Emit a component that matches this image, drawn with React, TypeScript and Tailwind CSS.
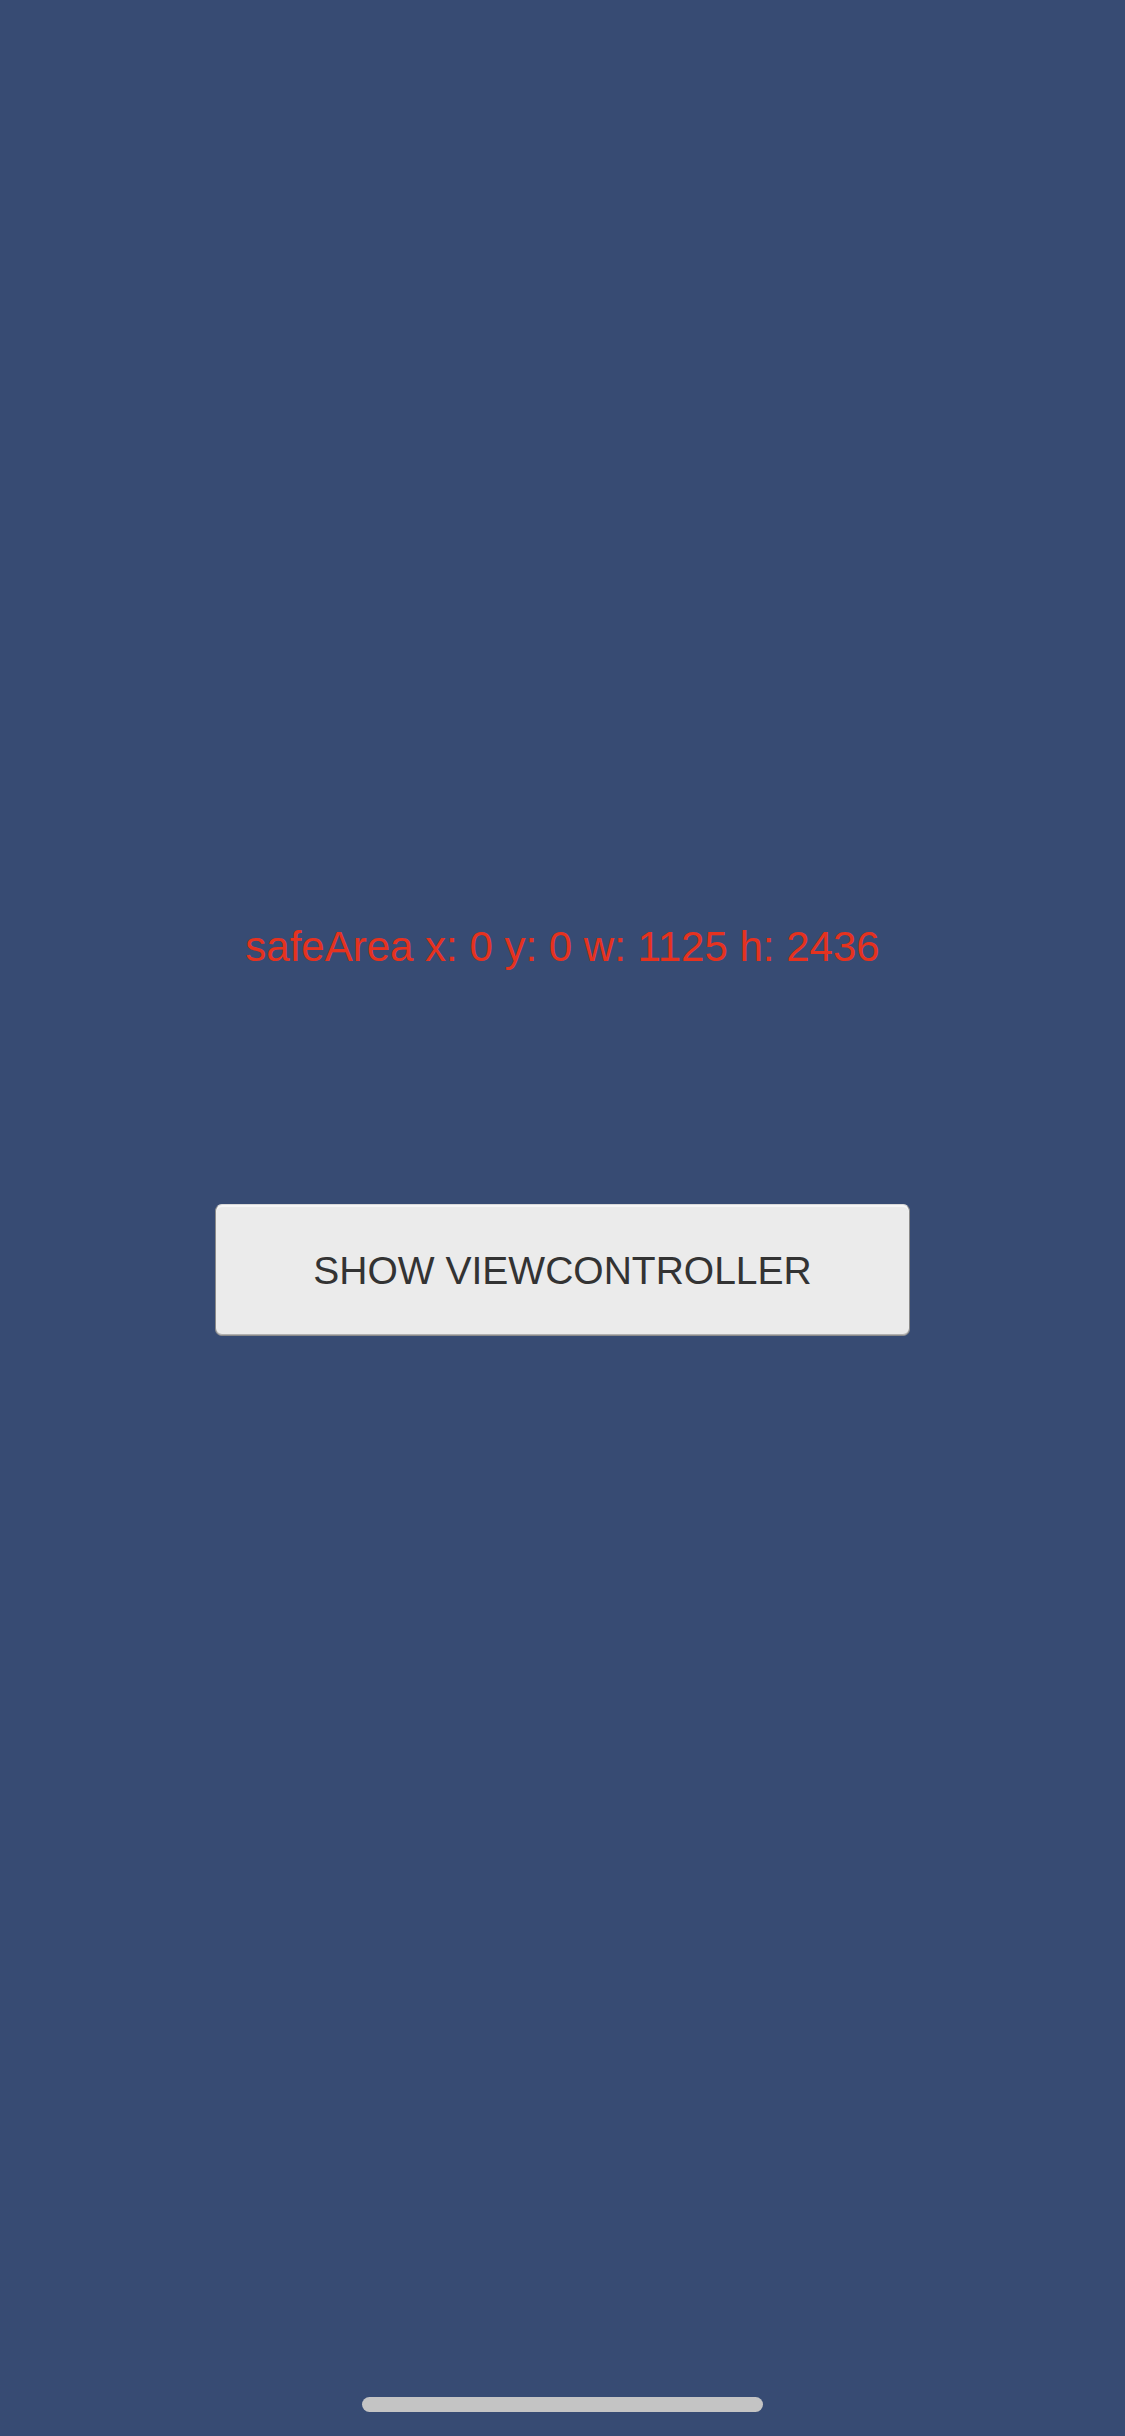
export default function App() {
  return (
    <div
      className="w-[1125px] h-[2436px] bg-[#374b73] flex flex-col items-center"
      style={{ fontFamily: '"Liberation Sans", Arial, sans-serif' }}
    >
      {/* safe area readout */}
      <div className="pt-[926px] text-[42px] leading-none text-[#e5321f] whitespace-nowrap">
        safeArea x: 0 y: 0 w: 1125 h: 2436
      </div>

      <button className="mt-[236px] w-[695px] h-[132px] rounded-[7px] bg-[#ebebeb] border border-[#8a8a8a] border-t-[#d9d9d9] shadow-[inset_0_2px_0_#f6f6f6,inset_0_-1px_0_#b0b0b0] flex items-center justify-center text-[39px] leading-none text-[#333333] whitespace-nowrap">
        SHOW VIEWCONTROLLER
      </button>

      {/* home indicator */}
      <div className="mt-[1061px] w-[401px] h-[15px] rounded-full bg-[#c4c4c4]" />
    </div>
  );
}
